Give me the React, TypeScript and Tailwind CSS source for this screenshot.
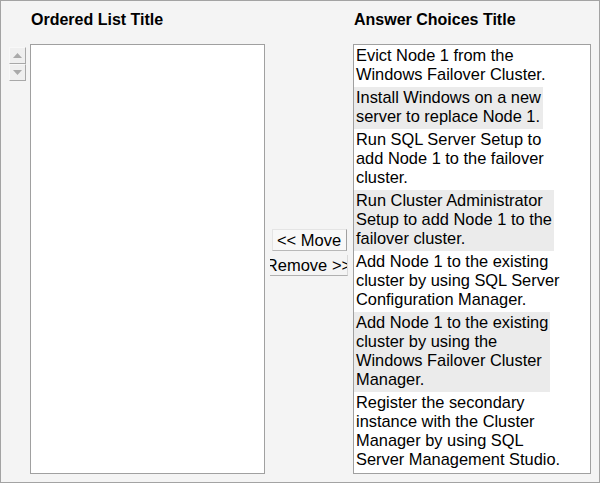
import React from 'react';

type Choice = {
	lines: string[];
	shaded: boolean;
};

const choices: Choice[] = [
	{ lines: ['Evict Node 1 from the', 'Windows Failover Cluster.'], shaded: false },
	{ lines: ['Install Windows on a new', 'server to replace Node 1.'], shaded: true },
	{ lines: ['Run SQL Server Setup to', 'add Node 1 to the failover', 'cluster.'], shaded: false },
	{ lines: ['Run Cluster Administrator', 'Setup to add Node 1 to the', 'failover cluster.'], shaded: true },
	{
		lines: ['Add Node 1 to the existing', 'cluster by using SQL Server', 'Configuration Manager.'],
		shaded: false,
	},
	{
		lines: ['Add Node 1 to the existing', 'cluster by using the', 'Windows Failover Cluster', 'Manager.'],
		shaded: true,
	},
	{
		lines: ['Register the secondary', 'instance with the Cluster', 'Manager by using SQL', 'Server Management Studio.'],
		shaded: false,
	},
];

const ArrowButton = ({ up }: { up: boolean }) => (
	<div className="w-[17px] h-[17px] flex items-center justify-center bg-[#efefef] border border-t-[#f8f8f8] border-l-[#f8f8f8] border-r-[#a8a8a8] border-b-[#a8a8a8]">
		<svg width="9" height="5" viewBox="0 0 9 5">
			{up ? <polygon points="0,5 9,5 4.5,0" fill="#a9a9a9" /> : <polygon points="0,0 9,0 4.5,5" fill="#a9a9a9" />}
		</svg>
	</div>
);

const App = () => {
	return (
		<div
			className="w-[600px] h-[483px] border border-[#a3a3a3] bg-[#f4f4f4] text-black"
			style={{ fontFamily: '"Liberation Sans", Arial, sans-serif' }}
		>
			<div className="grid grid-cols-[29px_235px_88px_238px] grid-rows-[43px_430px]">
				<div />
				<div className="pl-[1px] pt-[10px] text-[16px] leading-[17px] font-bold">Ordered List Title</div>
				<div />
				<div className="pl-[1px] pt-[10px] text-[16px] leading-[17px] font-bold">Answer Choices Title</div>

				{/* up / down */}
				<div className="pl-[8px] pt-[3px] flex flex-col">
					<ArrowButton up />
					<ArrowButton up={false} />
				</div>

				<div className="bg-white border border-[#a0a0a0]" />

				<div className="flex flex-col items-center justify-center pb-[13px] text-[16.5px]">
					<button className="w-[75px] h-[22px] bg-[#f8f8f8] border border-t-[#e4e4e4] border-l-[#e4e4e4] border-r-[#a0a0a0] border-b-[#b8b8b8] leading-[18px] text-black">
						&lt;&lt; Move
					</button>
					<div className="mt-[4px] w-[78px] h-[21px] overflow-hidden flex justify-center border-b border-b-[#b0b0b0] border-r border-r-[#d8d8d8] leading-[20px]">
						<span className="whitespace-nowrap">Remove &gt;&gt;</span>
					</div>
				</div>

				<div className="bg-white border border-[#a0a0a0] flex flex-col items-start text-[16.4px] leading-[19px]">
					{choices.map((c, i) => (
						<div key={i} className={`px-[2px] pt-[1px] pb-[3px] whitespace-nowrap ${c.shaded ? 'bg-[#ebebeb]' : ''}`}>
							{c.lines.map((l, j) => (
								<div key={j}>{l}</div>
							))}
						</div>
					))}
				</div>
			</div>
		</div>
	);
};

export default App;
